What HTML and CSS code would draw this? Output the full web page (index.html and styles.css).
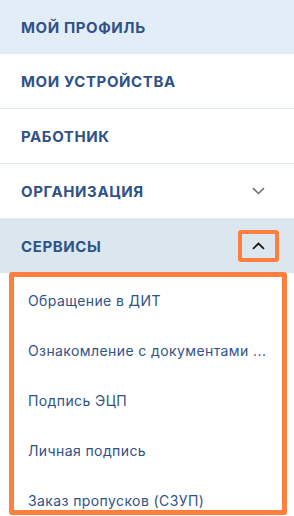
FILE: index.html
```html
<!DOCTYPE html>
<html lang="ru">
<head>
  <meta charset="UTF-8" />
  <meta name="viewport" content="width=device-width, initial-scale=1.0" />
  <title>Меню</title>
  <link rel="stylesheet" href="styles.css">
</head>
<body>
  <nav class="menu">
    <div class="menu-item active">МОЙ ПРОФИЛЬ</div>
    <div class="menu-item">МОИ УСТРОЙСТВА</div>
    <div class="menu-item">РАБОТНИК</div>
    <div class="menu-item">
      <span>ОРГАНИЗАЦИЯ</span>
      <span class="toggle">
        <svg width="13" height="8" viewBox="0 0 13 8"><path d="M1 1.2l5.5 5.3 5.5-5.3" fill="none" stroke="#6f6f6f" stroke-width="1.6"/></svg>
      </span>
    </div>
    <div class="menu-item open">
      <span>СЕРВИСЫ</span>
      <span class="toggle marked">
        <svg width="13" height="8" viewBox="0 0 13 8"><path d="M1 6.8l5.5-5.3 5.5 5.3" fill="none" stroke="#1a1a1a" stroke-width="1.8"/></svg>
      </span>
    </div>
    <ul class="submenu">
      <li>Обращение в ДИТ</li>
      <li>Ознакомление с документами ...</li>
      <li>Подпись ЭЦП</li>
      <li>Личная подпись</li>
      <li>Заказ пропусков (СЗУП)</li>
    </ul>
  </nav>
</body>
</html>
```

FILE: styles.css
```css
body {
  margin: 0;
  background-color: #ffffff;
  font-family: Inter, Roboto, "Liberation Sans", sans-serif;
}

.menu {
  width: 294px;
}

.menu-item {
  display: flex;
  justify-content: space-between;
  align-items: center;
  height: 54px;
  padding: 0 21px;
  border-bottom: 1px solid #e3edf7;
  box-sizing: content-box;
  font-size: 15px;
  font-weight: 700;
  letter-spacing: 0.6px;
  color: #2f5287;
}

.menu-item.active {
  border-bottom: none;
  background-color: #e3edf7;
}

.menu-item.open {
  border-bottom: none;
  background-color: #dce6ee;
}

.toggle {
  display: flex;
  justify-content: center;
  align-items: center;
  width: 33px;
  height: 24px;
  margin-right: -6px;
  border: 4px solid transparent;
  border-radius: 3px;
}

.toggle.marked {
  border-color: #ff7f3f;
}

.submenu {
  list-style: none;
  margin: -1px 7px 2px 9px;
  padding: 0;
  height: 233px;
  overflow: hidden;
  border: 5px solid #ff7f3f;
  border-radius: 3px;
}

.submenu li {
  height: 50px;
  line-height: 48px;
  padding: 0 14px;
  font-size: 14px;
  letter-spacing: 0.4px;
  color: #2f5287;
  white-space: nowrap;
}
```
